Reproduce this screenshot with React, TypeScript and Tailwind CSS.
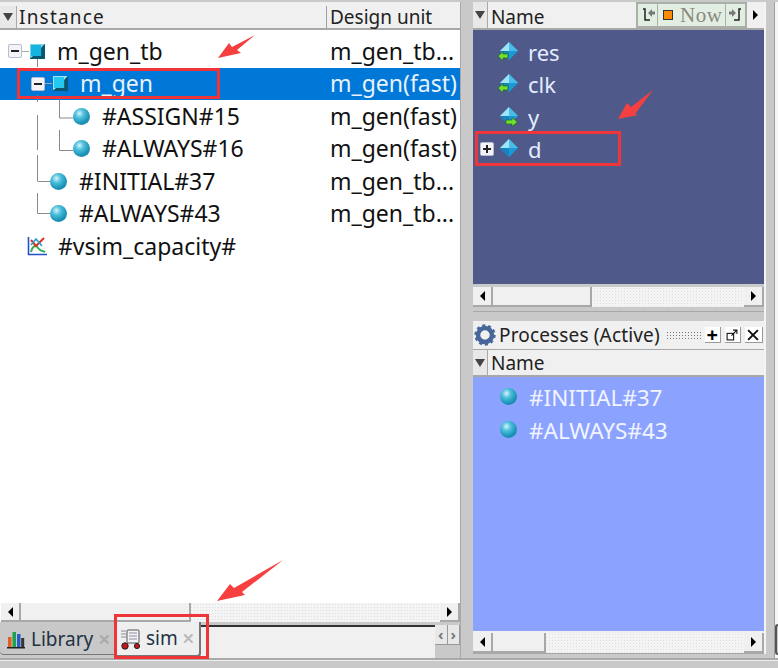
import React from "react";

const font = { fontFamily: '"Noto Sans", "Open Sans", sans-serif' };

function Ball({ className = "" }: { className?: string }) {
  return (
    <div className={`h-[17px] w-[17px] shrink-0 rounded-full bg-[radial-gradient(circle_at_38%_32%,#d8f4fa_0%,#4fc0dc_28%,#1f97bb_60%,#0f6f90_100%)] ${className}`} />
  );
}

function Cube({ light = false }: { light?: boolean }) {
  return (
    <svg width="17" height="17" viewBox="0 0 17 17" className="shrink-0">
      <rect x="1" y="1" width="15" height="15" fill={light ? "#0f6f80" : "#10607a"} />
      <polygon points="1,1 16,1 12,5 12,12 1,15" fill={light ? "#9fe4f2" : "#7fd4e4"} />
      <rect x="2" y="2" width="10" height="11" fill={light ? "#25c8ee" : "#14b4e0"} />
      <polygon points="1,16 16,16 16,1 13,4 13,13 4,13" fill="#0c5570" />
    </svg>
  );
}

function Diamond({ arrow }: { arrow?: "left" | "right" }) {
  return (
    <svg width="20" height="20" viewBox="0 0 20 20" className="shrink-0">
      <polygon points="11,0 20,9 11,18 2,9" fill="#1a9bd8" />
      <polygon points="11,0 2,9 11,9" fill="#a0e4f8" />
      <polygon points="11,0 20,9 11,9" fill="#4bbce8" />
      <polygon points="2,9 11,18 11,9" fill="#1584c0" />
      {arrow === "left" && <polygon points="0,14 5,9.5 5,12 10,12 10,16 5,16 5,19" fill="#6fe030" stroke="#1c5a10" strokeWidth="0.6" />}
      {arrow === "right" && <polygon points="19.5,15 14,10.5 14,13 8,13 8,17 14,17 14,19.5" fill="#6fe030" stroke="#1c5a10" strokeWidth="0.6" />}
    </svg>
  );
}

function Expander({ sign }: { sign: "+" | "-" }) {
  return (
    <div className="flex h-[14px] w-[14px] shrink-0 items-center justify-center rounded-[2px] border border-[#b8bcd0] bg-[#f4f4f8]">
      <div className="relative h-[2px] w-[8px] bg-[#222]">
        {sign === "+" && <div className="absolute left-[3px] top-[-3px] h-[8px] w-[2px] bg-[#222]" />}
      </div>
    </div>
  );
}

function Tri({ dir }: { dir: "left" | "right" | "down" }) {
  const cls =
    dir === "left"
      ? "border-y-[5px] border-r-[5px] border-y-transparent border-r-black"
      : dir === "right"
        ? "border-y-[5px] border-l-[5px] border-y-transparent border-l-black"
        : "border-x-[5px] border-t-[8px] border-x-transparent border-t-[#444]";
  return <div className={`h-0 w-0 ${cls}`} />;
}

function ScrollBar({ thumb, className = "" }: { thumb: number; className?: string }) {
  return (
    <div className={`flex items-stretch bg-[#f4f4f4] bg-[radial-gradient(#dedede_0.5px,transparent_0.6px)] bg-[length:3px_3px] ${className}`}>
      <div className="flex w-[20px] items-center justify-center border-r-2 border-b-2 border-[#a8a8a8] bg-[#f0f0f0]">
        <Tri dir="left" />
      </div>
      <div className="border-r-2 border-b-2 border-[#a8a8a8] bg-[#f0f0f0]" style={{ width: thumb }} />
      <div className="flex-1" />
      <div className="flex w-[20px] items-center justify-center border-r-2 border-b-2 border-[#a8a8a8] bg-[#f0f0f0]">
        <Tri dir="right" />
      </div>
    </div>
  );
}

const rows = [
  { indent: 8, exp: "-", icon: "cube", text: "m_gen_tb", gap: 11, unit: "m_gen_tb..." },
  { indent: 31, exp: "-", icon: "cubeLight", text: "m_gen", gap: 11, unit: "m_gen(fast)", selected: true },
  { indent: 73, icon: "ball", text: "#ASSIGN#15", gap: 12, unit: "m_gen(fast)" },
  { indent: 73, icon: "ball", text: "#ALWAYS#16", gap: 12, unit: "m_gen(fast)" },
  { indent: 50, icon: "ball", text: "#INITIAL#37", gap: 12, unit: "m_gen_tb..." },
  { indent: 50, icon: "ball", text: "#ALWAYS#43", gap: 12, unit: "m_gen_tb..." },
  { indent: 27, icon: "chart", text: "#vsim_capacity#", gap: 10, unit: "" },
];

function Chart() {
  return (
    <svg width="21" height="20" viewBox="0 0 21 20" className="shrink-0">
      <path d="M1.5 1V18.5H20" fill="none" stroke="#2050c8" strokeWidth="1.6" />
      <path d="M4 16C6 9 9 9 11 12S16 15 18 16" fill="none" stroke="#30b050" strokeWidth="2" />
      <path d="M4 4L9 10L17 2" fill="none" stroke="#e03020" strokeWidth="2" />
      <path d="M4 9L9 3L15 10" fill="none" stroke="#20a0d0" strokeWidth="1.6" />
    </svg>
  );
}

// coordinates relative to tree top (y = 30 on the page)
function TreeLines() {
  return (
    <svg className="absolute left-0 top-0 z-10" width="120" height="220" fill="none" stroke="#8a8a8a" strokeWidth="1">
      <path d="M37.5 29V37M37.5 65V72M37.5 85V120M37.5 125V151M37.5 163V183.5H50M37.5 151.5H50" />
      <path d="M59.5 67V88H73M59.5 100V120.5H73" />
    </svg>
  );
}

function Red({ className }: { className: string }) {
  return <div className={`absolute z-20 border-[3px] border-[#f0353a] ${className}`} />;
}

function Arrow({ className, w, h, points }: { className: string; w: number; h: number; points: string }) {
  return (
    <svg className={`absolute z-20 ${className}`} width={w} height={h} viewBox={`0 0 ${w} ${h}`}>
      <polygon points={points} fill="#f5403f" />
    </svg>
  );
}

export default function App() {
  return (
    <div className="relative h-[668px] w-[778px] overflow-hidden bg-[#c9c9c9]" style={font}>
      <div className="flex h-[658px] items-stretch pt-[2px]">
        {/* Left panel */}
        <div className="flex w-[461px] flex-col border-r border-[#a8a8a8] bg-white">
          <div className="flex h-[28px] shrink-0 border-b-2 border-[#a8a8a8] bg-[#f0f0f0] pt-[4px] text-[19px] leading-none text-[#222]">
            <div className="flex w-[17px] items-center justify-center border-r border-[#a8a8a8] bg-[#e8e8e8]">
              <Tri dir="down" />
            </div>
            <div className="flex w-[309px] items-center pl-[2px] tracking-[1.2px]">Instance</div>
            <div className="flex flex-1 items-center border-l border-[#a0a0a0] pl-[3px]">Design unit</div>
          </div>
          <div className="relative flex-1 pt-[5px]">
            <TreeLines />
            {rows.map((r) => (
              <div key={r.text} className={`relative flex h-[32.5px] items-center text-[23px] leading-none ${r.selected ? "bg-[#0078d7] text-[#e8f2ff]" : "text-[#111]"}`}>
                <div className="flex w-[326px] items-center" style={{ paddingLeft: r.indent }}>
                  {r.exp && <Expander sign="-" />}
                  {r.exp && <div className="h-[1px] w-[7px] bg-[#aaa]" />}
                  {(r.icon === "cube" || r.icon === "cubeLight") && <Cube light={r.icon === "cubeLight"} />}
                  {r.icon === "ball" && <Ball />}
                  {r.icon === "chart" && <Chart />}
                  <span style={{ marginLeft: r.gap }}>{r.text}</span>
                </div>
                <div className="pl-[4px]">{r.unit}</div>
              </div>
            ))}
          </div>
          <ScrollBar thumb={170} className="ml-[1px] h-[19px] shrink-0" />
          {/* Tabs */}
          <div className="flex h-[36px] shrink-0 items-start bg-[#c9c9c9]">
            <div className="mt-[2px] flex h-[31px] w-[115px] items-center gap-[5px] rounded-bl-[4px] border-b border-[#777] bg-[#c8c8c8] pl-[6px] text-[19px] text-[#234]">
              <svg width="20" height="20" viewBox="0 0 20 20" className="shrink-0">
                <rect x="2" y="8" width="3.5" height="10" fill="#e06020" />
                <rect x="6.5" y="3" width="3.5" height="15" fill="#20a050" />
                <rect x="11" y="5" width="3.5" height="13" fill="#2060c8" />
                <rect x="15.2" y="9" width="3" height="9" fill="#333" />
                <rect x="1" y="18" width="18" height="1.5" fill="#222" />
              </svg>
              <span>Library</span>
              <span className="text-[15px] font-bold text-[#aaa]">✕</span>
            </div>
            <div className="flex h-[35px] w-[86px] items-center gap-[4px] rounded-b-[4px] border-r-2 border-b-2 border-[#777] bg-[#efefef] pl-[5px] text-[19px] text-[#234]">
              <svg width="22" height="22" viewBox="0 0 22 22" className="shrink-0">
                <rect x="7" y="2" width="12" height="13" rx="1" fill="#f4f4f4" stroke="#555" />
                <path d="M1 3H6M1 6H6M1 9H6M9 5H17M9 8H17M9 11H17" stroke="#8a8aa8" strokeWidth="1" />
                <circle cx="5" cy="18" r="3.2" fill="#c01818" stroke="#222" />
                <circle cx="17" cy="18" r="2.6" fill="#c01818" stroke="#222" />
              </svg>
              <span>sim</span>
              <span className="text-[15px] font-bold text-[#bbb]">✕</span>
            </div>
            <div className="mt-[3px] h-[33px] flex-1 border-t-2 border-[#333] bg-[#f0f0f0]" />
            <div className="mt-[3px] flex h-[20px] w-[25px] shrink-0 bg-[#c9c9c9]">
              <div className="flex flex-1 items-center justify-center border-r border-b border-[#999] bg-[#e8e8e8] text-[15px] leading-none font-bold text-[#777]">‹</div>
              <div className="flex flex-1 items-center justify-center border-r border-b border-[#999] bg-[#e8e8e8] text-[15px] leading-none font-bold text-[#777]">›</div>
            </div>
          </div>
        </div>

        {/* Right column */}
        <div className="ml-[11px] mb-[4px] flex w-[294px] flex-col border-r-2 border-[#f4f4f4] pl-[1px]">
          <div className="flex h-[310px] shrink-0 flex-col border-b border-[#a8a8a8]">
            <div className="flex h-[28px] shrink-0 items-stretch border-b-2 border-[#a8a8a8] bg-[#f0f0f0]">
              <div className="flex w-[15px] items-center justify-center border-r border-[#a8a8a8] bg-[#e8e8e8]">
                <Tri dir="down" />
              </div>
              <div className="flex w-[149px] items-center pl-[3px] pt-[4px] text-[19px] leading-none text-[#222]">Name</div>
              <div className="flex h-[26px] items-stretch border-2 border-[#a8b0a8] bg-[#e2eee2]">
                <div className="flex w-[20px] items-center justify-center border-r border-[#a8b0a8]">
                  <svg width="16" height="16" viewBox="0 0 16 16"><path d="M3 2H5V13H10" fill="none" stroke="#222" strokeWidth="1.5" /><path d="M8 6L12 2V4.5H15V7.5H12V10Z" fill="#777" /></svg>
                </div>
                <div className="flex w-[67px] items-center gap-[7px] pl-[5px] font-['Liberation_Serif',serif] text-[21px] leading-none tracking-[0.5px] text-[#8a8a80]">
                  <div className="h-[10px] w-[10px] shrink-0 border border-[#333] bg-[#ff8a00]" />
                  <span>Now</span>
                </div>
                <div className="flex w-[20px] items-center justify-center border-l border-[#a8b0a8]">
                  <svg width="16" height="16" viewBox="0 0 16 16"><path d="M13 2H11V13H6" fill="none" stroke="#222" strokeWidth="1.5" /><path d="M8 6L4 2V4.5H1V7.5H4V10Z" fill="#777" /></svg>
                </div>
              </div>
              <div className="flex w-[17px] items-center justify-center"><Tri dir="right" /></div>
            </div>
            <div className="flex flex-1 flex-col bg-[#505a8a] pt-[6px] text-[22px] leading-none text-[#e4ecff]">
              {[
                { t: "res", a: "left" as const },
                { t: "clk", a: "left" as const },
                { t: "y", a: "right" as const },
                { t: "d" },
              ].map((s) => (
                <div key={s.t} className="flex h-[32.3px] items-center pl-[7px]">
                  <div className="flex w-[17px] items-center">{!s.a && <Expander sign="+" />}</div>
                  <div className="mr-[10px] ml-[1px]"><Diamond arrow={s.a} /></div>
                  <span>{s.t}</span>
                </div>
              ))}
            </div>
            <ScrollBar thumb={99} className="mt-[3px] mb-[4px] h-[20px] shrink-0" />
          </div>
          <div className="mt-[9px] flex flex-1 flex-col border-b border-[#a8a8a8] bg-[#f0f0f0]">
            <div className="flex h-[28px] shrink-0 items-center bg-[#f0f0f0] pl-[1px] text-[19px] text-[#222]">
              <svg width="22" height="22" viewBox="0 0 22 22" className="shrink-0">
                <circle cx="11" cy="11" r="7" fill="none" stroke="#47679a" strokeWidth="4.5" />
                <circle cx="11" cy="11" r="9.4" fill="none" stroke="#47679a" strokeWidth="2.6" strokeDasharray="3 2.9" />
              </svg>
              <span className="ml-[3px] tracking-[0.15px]">Processes (Active)</span>
              <div className="mr-[4px] ml-[6px] h-[9px] w-[35px] bg-[radial-gradient(#777_0.6px,transparent_0.7px)] bg-[length:3px_3px]" />
              <div className="flex gap-[4px]">
                <div className="flex h-[16px] w-[16px] items-center justify-center border-r border-b border-[#999] bg-white text-[20px] leading-none font-bold text-black">+</div>
                <div className="flex h-[16px] w-[16px] items-center justify-center border-r border-b border-[#999] bg-white">
                  <svg width="12" height="12" viewBox="0 0 11 11"><rect x="1" y="4" width="6" height="6" fill="none" stroke="#111" /><path d="M5 6L10 1M6.5 1H10V4.5" fill="none" stroke="#111" /></svg>
                </div>
                <div className="flex h-[16px] w-[18px] items-center justify-center border-r border-b border-[#999] bg-white">
                  <svg width="12" height="12" viewBox="0 0 11 11"><path d="M1 1L10 10M10 1L1 10" stroke="#111" strokeWidth="1.8" /></svg>
                </div>
              </div>
            </div>
            <div className="flex h-[28px] shrink-0 border-t border-b-2 border-[#a8a8a8]">
              <div className="flex w-[15px] items-center justify-center border-r border-[#a8a8a8] bg-[#e8e8e8]">
                <Tri dir="down" />
              </div>
              <div className="flex items-center pl-[3px] pt-[2px] text-[19px] leading-none text-[#222]">Name</div>
            </div>
            <div className="flex flex-1 flex-col bg-[#8ba3ff] pt-[5px] text-[22.5px] leading-none text-[#f2f4ff]">
              {["#INITIAL#37", "#ALWAYS#43"].map((t) => (
                <div key={t} className="flex h-[32.5px] items-center pl-[27px]">
                  <Ball className="mb-[3px]" />
                  <span className="ml-[12px]">{t}</span>
                </div>
              ))}
            </div>
            <ScrollBar thumb={53} className="mt-[2px] h-[20px] shrink-0" />
          </div>
        </div>

        {/* Edge of the neighbouring panel */}
        <div className="ml-[8px] flex w-[4px] flex-col border-l border-[#a0a0a0] bg-[#f6f6f6]">
          <div className="flex-1" />
          <div className="h-[31px] rounded-l-[3px] border-l-2 border-y-2 border-[#555] bg-[#c9c9c9]" />
          <div className="h-[3px]" />
        </div>
      </div>
      <div className="h-[2px] bg-[#aaa]" />
      <div className="h-[1px] bg-[#eee]" />

      {/* annotations */}
      <Red className="left-[17px] top-[68px] h-[31px] w-[203px]" />
      <Red className="left-[475px] top-[131px] h-[35px] w-[146px]" />
      <Red className="left-[114px] top-[614px] h-[45px] w-[95px]" />
      <Arrow className="left-[218px] top-[34px]" w={38} h={25} points="0,24 11,9 14,13 37,1 19,16 23,19" />
      <Arrow className="left-[618px] top-[90px]" w={36} h={30} points="0,29 9,13 13,17 35,0 17,24 20,25" />
      <Arrow className="left-[216px] top-[559px]" w={68} h={43} points="1,42 14,25 18,29 67,1 26,33 29,36" />
    </div>
  );
}
